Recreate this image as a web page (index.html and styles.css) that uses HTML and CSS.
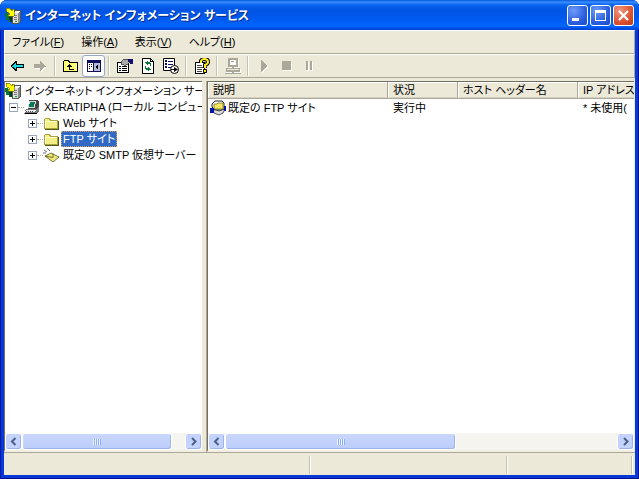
FILE: index.html
```html
<!DOCTYPE html>
<html lang="ja">
<head>
<meta charset="utf-8">
<title>インターネット インフォメーション サービス</title>
<link rel="stylesheet" href="styles.css">
</head>
<body>
<svg class="defs" aria-hidden="true">
  <symbol id="iis" viewBox="0 0 16 16">
    <path d="M7 4l3-2h6v11l-3 3H7z" fill="#555"/>
    <path d="M8 5h5v10H8z" fill="#ddd"/><path d="M13 5l2-2v10l-2 2z" fill="#888"/><path d="M8 5l2-2h5l-2 2z" fill="#f4f4f4"/>
    <path d="M9 7h3v1H9zM9 9h3v1H9zM9 11h3v1H9z" fill="#777"/><path d="M10 13h2v1h-2z" fill="#0a0"/>
    <path d="M0 5h3v3h4v6H4v-2H1V9H0z" fill="#087a35"/><path d="M4 9h3v5H5z" fill="#053a25"/>
    <path d="M1 0h3l3 3V1h2v7H3V6h2L1 3z" fill="#ff0" stroke="#5a5a00" stroke-width=".6"/>
  </symbol>
  <symbol id="folder" viewBox="0 0 16 16">
    <path d="M1.500 4.500l1-1h4l1 2h7v8h-13z" fill="#f5ee86" stroke="#a8a440"/>
    <path d="M2 6h12v1H2zM2 6h1v7H2z" fill="#ffffd5"/>
    <path d="M2 14h13V6h1v9H2z" fill="#555520"/>
  </symbol>
</svg>
<div class="window">
  <header class="titlebar">
    <svg class="icon"><use href="#iis"/></svg>
    <h1>インターネット インフォメーション サービス</h1>
    <button class="caption" aria-label="最小化"><svg viewBox="0 0 21 21"><path d="M5 13h7v3H5z" fill="#fff"/></svg></button>
    <button class="caption" aria-label="最大化"><svg viewBox="0 0 21 21"><path d="M5 5h11v11H5zM6 8v7h9V8z" fill="#fff" fill-rule="evenodd"/></svg></button>
    <button class="caption close" aria-label="閉じる"><svg class="smooth" viewBox="0 0 21 21"><path d="M6 6l9 9M15 6l-9 9" stroke="#fff" stroke-width="2.200"/></svg></button>
  </header>
  <nav class="menubar">
    <button>ファイル(<u>F</u>)</button><button>操作(<u>A</u>)</button><button>表示(<u>V</u>)</button><button>ヘルプ(<u>H</u>)</button>
  </nav>
  <div class="toolbar" role="toolbar">
    <button aria-label="戻る"><svg class="icon" viewBox="0 0 16 16"><path d="M2 7h1V6h1V5h1V4h1V3h2v3h7v4H8v3H6v-1H5v-1H4v-1H3V9H2z"/><path d="M3 8h1V7h1V6h1V5h1v2h7v2H7v2H6v-1H5V9H3z" fill="#19dce8"/></svg></button>
    <button aria-label="進む" disabled><svg class="icon" viewBox="0 0 16 16"><path d="M15 9L9 14v-3H3v-2h7z" fill="#fff"/><path d="M14 8h-1V7h-1V6h-1V5h-1V4H9V3H8v3H2v4h6v3h1v-1h1v-1h1v-1h1V9h1z" fill="#aca899"/></svg></button>
    <i class="sep"></i>
    <button aria-label="上へ"><svg class="icon" viewBox="0 0 16 16"><path d="M.5 13.500v-10l1-1h4l1 2h8v9z" fill="#ffff78" stroke="#000"/><path d="M6 6h1v1h1v1h1v1H7v2h4v1H6V9H4V8h1V7h1z"/></svg></button>
    <button class="pressed" aria-label="コンソール ツリー"><svg class="icon" viewBox="0 0 16 16"><path d="M1 2h14v12H1z" fill="#101060"/><path d="M2 5h5v8H2z" fill="#fff"/><path d="M8 5h6v8H8z" fill="#b5b9d5"/><path d="M3 6h1v1H3zM5 6h1v1H5zM3 8h1v1H3zM5 8h1v1H5zM3 10h1v1H3zM12 6v6L9 9z"/></svg></button>
    <i class="sep"></i>
    <button aria-label="プロパティ"><svg class="icon" viewBox="0 0 16 16"><path d="M.5 4.500h11v10H.5z" fill="#fff" stroke="#000"/><path d="M2 8h2v1H2zM5 8h5v1H5zM2 10h2v1H2zM5 10h5v1H5zM2 12h2v1H2zM5 12h5v1H5z"/><path d="M4 4l3-3h5v4l-3 2H7L6 6H4z" fill="#aaa" stroke="#333" stroke-width=".8"/><path d="M11 1h5v5h-3V4h-2z" fill="#101070"/></svg></button>
    <button aria-label="最新の情報に更新"><svg class="icon" viewBox="0 0 16 16"><path d="M2.500.5h8l3 3v12h-11z" fill="#fff" stroke="#000"/><path d="M10.500.5v3h3" fill="none" stroke="#000"/><path d="M7 3h1v1h2v1h1v3h-1V6H8v1H7V6H6V5H5V4h2zM5 8h1v2h2V9h1v1h1v1h1v1H9v1H8v-1H6v-1H5z" fill="#087a35"/></svg></button>
    <button aria-label="一覧のエクスポート"><svg class="icon smooth" viewBox="0 0 16 16"><path d="M.5.5h11v12H.5z" fill="#fff" stroke="#000"/><path d="M2 2h2v2H2zM2 5h2v2H2zM2 8h2v2H2zM5 3h5v1H5zM5 6h5v1H5zM5 9h3v1H5z" fill="#101060"/><circle cx="11.500" cy="11.500" r="4" fill="#fff" stroke="#000"/><path d="M8 11h3V9l4 2.500-4 2.500v-2H8z"/></svg></button>
    <i class="sep"></i>
    <button aria-label="ヘルプ"><svg class="icon" viewBox="0 0 16 16"><path d="M1.500 4.500h9v11h-9z" fill="#fff" stroke="#000"/><path d="M3 7h5v1H3zM3 9h6v1H3zM3 11h5v1H3zM3 13h5v1H3z" fill="#444"/><g class="smooth"><path d="M7 5V3q1-2 3-2 4 0 4 3 0 2-3 3v3" fill="none" stroke="#000" stroke-width="4"/><path d="M7 5V3q1-2 3-2 4 0 4 3 0 2-3 3v3" fill="none" stroke="#fff21a" stroke-width="2"/><path d="M9.500 11.500h3v3h-3z" fill="#fff21a" stroke="#000"/></g></svg></button>
    <i class="sep"></i>
    <button aria-label="接続" disabled><svg class="icon" viewBox="0 0 16 16"><path d="M4 1h10v9H4zM1 11h15v5H1z" fill="#fff"/><path d="M3 0h10v9H3zM5 2v5h6V2z" fill="#aca899" fill-rule="evenodd"/><path d="M7 9h2v1H7zM1 10h14v4H1zM0 15h16v1H0zM7 14h2v1H7zM6 3h3v1H6z" fill="#aca899"/><path d="M2 11h12v1H2z" fill="#ece9d8"/></svg></button>
    <i class="sep"></i>
    <button aria-label="開始" disabled><svg class="icon" viewBox="0 0 16 16"><path d="M6 3v12l6-6z" fill="#fff"/><path d="M5 2v12l6-6z" fill="#aca899"/></svg></button>
    <button aria-label="停止" disabled><svg class="icon" viewBox="0 0 16 16"><path d="M4 4h9v9H4z" fill="#fff"/><path d="M3 3h9v9H3z" fill="#aca899"/></svg></button>
    <button aria-label="一時停止" disabled><svg class="icon" viewBox="0 0 16 16"><path d="M5 4h2v9H5zM9 4h2v9H9z" fill="#fff"/><path d="M4 3h2v9H4zM8 3h2v9H8z" fill="#aca899"/></svg></button>
  </div>
  <main class="panes">
    <section class="pane tree-pane">
      <ul class="tree">
        <li><svg class="icon"><use href="#iis"/></svg><span>インターネット インフォメーション サービス</span></li>
        <li class="level1"><button class="toggle" aria-label="折りたたむ"><svg viewBox="0 0 9 9"><path d="M2 4h5v1H2z"/></svg></button><i class="branch"></i>
          <svg class="icon" viewBox="0 0 16 16"><path d="M5 1h8l2 1v8H4z" fill="#444"/><path d="M5 2h7l-1 7H4z" fill="#ddd"/><path d="M6 3h5l-1 5H5z" fill="#087a55"/><path d="M2 10h10l3-2v4l-2 3H0z" fill="#777"/><path d="M2 11h10l-1 2H1z" fill="#eee"/><path d="M2 12h8" stroke="#444" stroke-dasharray="1 1"/><path d="M1 14h12v1H1z"/></svg><span>XERATIPHA (ローカル コンピューター)</span></li>
        <li class="level2"><button class="toggle" aria-label="展開"><svg viewBox="0 0 9 9"><path d="M2 4h5v1H2zM4 2h1v5H4z"/></svg></button><i class="branch"></i><svg class="icon"><use href="#folder"/></svg><span>Web サイト</span></li>
        <li class="level2"><button class="toggle" aria-label="展開"><svg viewBox="0 0 9 9"><path d="M2 4h5v1H2zM4 2h1v5H4z"/></svg></button><i class="branch"></i><svg class="icon"><use href="#folder"/></svg><span class="selected">FTP サイト</span></li>
        <li class="level2"><button class="toggle" aria-label="展開"><svg viewBox="0 0 9 9"><path d="M2 4h5v1H2zM4 2h1v5H4z"/></svg></button><i class="branch"></i>
          <svg class="icon smooth" viewBox="0 0 16 16"><path d="M2 9l6-3 8 4-6 5z" fill="#f0e878" stroke="#555520" stroke-width=".8"/><path d="M2 9l8 1.500V6.500" fill="none" stroke="#555520" stroke-width=".8"/><path d="M1 3l3 2M4 1l3 3M0 6h3" stroke="#333" stroke-width=".7"/></svg><span>既定の SMTP 仮想サーバー</span></li>
      </ul>
      <div class="scrollbar">
        <button aria-label="左へ"><svg viewBox="0 0 9 9"><path d="M6.500 1L3 4.500 6.500 8"/></svg></button>
        <div class="track"><div class="thumb tree-thumb"><i class="grip"></i></div></div>
        <button aria-label="右へ"><svg viewBox="0 0 9 9"><path d="M3 1l3.500 3.500L3 8"/></svg></button>
      </div>
    </section>
    <section class="pane list-pane">
      <div class="list">
        <table>
          <colgroup><col class="c-name"><col class="c-state"><col class="c-host"><col class="c-ip"></colgroup>
          <thead><tr><th>説明</th><th>状況</th><th>ホスト ヘッダー名</th><th>IP アドレス</th></tr></thead>
          <tbody><tr><td><div class="name"><svg class="icon smooth" viewBox="0 0 16 16"><path d="M2 6V4l3-3h7l2 2v7H3z" fill="#fff" stroke="#222"/><path d="M4 6V4h3l1-1h5v6H4z" fill="#f5e85a" stroke="#77751a" stroke-width=".8"/><path d="M2 10h4l3 1 6-2-2 4-4 2-5-2z" fill="#ddd" stroke="#222" stroke-width=".8"/><path d="M0 8h4v5H0zM14 6h2v5h-2z" fill="#0014a8"/></svg><span>既定の FTP サイト</span></div></td><td>実行中</td><td></td><td>* 未使用(</td></tr></tbody>
        </table>
      </div>
      <div class="scrollbar">
        <button aria-label="左へ"><svg viewBox="0 0 9 9"><path d="M6.500 1L3 4.500 6.500 8"/></svg></button>
        <div class="track"><div class="thumb list-thumb"><i class="grip"></i></div></div>
        <button aria-label="右へ"><svg viewBox="0 0 9 9"><path d="M3 1l3.500 3.500L3 8"/></svg></button>
      </div>
    </section>
  </main>
  <footer class="status"><span></span><span></span><span></span></footer>
</div>
</body>
</html>
```

FILE: styles.css
```css
* { box-sizing: border-box; }
body {
  margin: 0;
  background: #fff;
  color: #000;
  font: 11px/16px "Liberation Sans", "Noto Sans CJK JP", sans-serif;
  font-feature-settings: "palt";
}
button {
  margin: 0;
  padding: 0;
  border: 0;
  background: none;
  color: inherit;
  font: inherit;
  font-feature-settings: inherit;
}
svg { display: block; shape-rendering: crispEdges; }
.smooth { shape-rendering: auto; }
.defs { position: absolute; width: 0; height: 0; }
.icon { flex: none; width: 16px; height: 16px; }

.window {
  display: flex;
  flex-direction: column;
  height: 100vh;
  padding: 0 4px 4px;
  overflow: hidden;
  border-radius: 7px 7px 0 0;
  background: #0839d6;
  box-shadow: inset 1px 0 #0019a8, inset -1px -1px #00138c;
}
.titlebar {
  display: flex;
  flex: none;
  align-items: center;
  gap: 2px;
  height: 30px;
  margin: 0 -4px;
  padding: 1px 5px 0;
  background: linear-gradient(#0058d8 0, #3c8cff 2px, #0864ee 5px, #0054e3 10px, #0058ee 18px, #0066ff 26px, #003dd0 30px);
}
.titlebar h1 {
  flex: 1;
  min-width: 0;
  margin: 0 0 0 2px;
  overflow: hidden;
  color: #fff;
  font-size: 12px;
  font-weight: bold;
  text-shadow: 1px 1px #0a2c8c;
  white-space: nowrap;
}
.caption {
  width: 21px;
  height: 21px;
  border: 1px solid #fff;
  border-radius: 3px;
  background: radial-gradient(circle at 30% 25%, #6f9cf8, #2a5fe0 60%, #1c48c8);
}
.caption svg { width: 21px; height: 21px; margin: -1px; }
.close { background: radial-gradient(circle at 30% 25%, #f09880, #dc5230 60%, #c03a18); }

.menubar, .toolbar {
  display: flex;
  flex: none;
  align-items: center;
  height: 24px;
  border: 1px solid;
  border-color: #fff #aca899 #aca899 #fff;
  background: #ece9d8;
}
.menubar { gap: 17px; padding-left: 7px; }
.menubar button { line-height: 20px; }
.toolbar button { display: grid; place-items: center; width: 23px; height: 22px; }
.toolbar .pressed {
  border: 1px solid #98a8c8;
  border-radius: 3px;
  background: #fff;
}
.sep {
  width: 2px;
  height: 20px;
  margin: 0 3px;
  border-left: 1px solid #c5c2b0;
  border-right: 1px solid #fff;
}

.panes {
  display: flex;
  flex: 1;
  gap: 5px;
  min-height: 0;
  padding: 3px 1px 0 0;
  background: #ece9d8;
}
.pane {
  display: flex;
  flex-direction: column;
  min-width: 0;
  border-top: 1px solid #716f64;
  border-left: 1px solid #716f64;
  border-bottom: 2px solid #f1efe2;
  background: #fff;
}
.tree-pane { flex: 0 0 198px; }
.list-pane { flex: 1; box-shadow: -1px 0 #aca899; }
.tree {
  flex: 1;
  min-height: 0;
  margin: 0;
  padding: 1px 0 0;
  overflow: hidden;
  list-style: none;
}
.tree li { display: flex; align-items: center; height: 16px; white-space: nowrap; }
.tree span { min-width: 0; margin-left: 2px; padding: 0 2px; overflow: hidden; }
.tree .level1 { padding-left: 4px; }
.tree .level2 { padding-left: 23px; }
.toggle {
  flex: none;
  width: 9px;
  height: 9px;
  border: 1px solid #98a8b8;
  background: #fff;
}
.toggle svg { width: 9px; height: 9px; margin: -1px; }
.branch { flex: none; width: 6px; border-top: 1px dotted #aca899; }
.tree .selected { outline: 1px dotted #d8a060; outline-offset: -1px; background: #316ac5; color: #fff; }

.list { flex: 1; min-height: 0; overflow: hidden; }
table { width: 600px; border-collapse: separate; border-spacing: 0; table-layout: fixed; }
.c-name { width: 180px; }
.c-state { width: 70px; }
.c-host { width: 120px; }
th {
  height: 17px;
  padding: 1px 5px 0;
  border-right: 1px solid #aca899;
  border-bottom: 1px solid #aca899;
  background: #ece9d8;
  box-shadow: inset 1px 1px #fff, inset 0 -1px #d6d2c2;
  font-weight: normal;
  line-height: 15px;
  text-align: left;
}
td { padding: 1px 5px 0; white-space: nowrap; }
.name { display: flex; gap: 2px; margin-left: -3px; }

.scrollbar { display: flex; flex: none; height: 17px; background: #f5f4ee; }
.scrollbar button {
  display: grid;
  flex: none;
  place-items: center;
  width: 17px;
  border: 1px solid #fff;
  border-radius: 3px;
  background: #c3d3fd;
  box-shadow: inset -1px -1px #9db4e8;
}
.scrollbar svg { width: 9px; height: 9px; fill: none; stroke: #4d6185; stroke-width: 2; shape-rendering: auto; }
.track { flex: 1; min-width: 0; }
.thumb {
  display: grid;
  place-items: center;
  height: 17px;
  border: 1px solid #fff;
  border-radius: 3px;
  background: linear-gradient(#c9d7fd, #bccdfa);
  box-shadow: inset -1px -1px #9db4e8;
}
.tree-thumb { width: 92%; }
.list-thumb { width: 59%; }
.grip { width: 8px; height: 6px; background: repeating-linear-gradient(90deg, #eef4fe 0 1px, #8cb0f8 1px 2px); }

.status {
  display: grid;
  flex: none;
  grid-template-columns: 306fr 197fr 125fr;
  height: 23px;
  padding: 3px 3px 1px 0;
  border-top: 1px solid #aca899;
  background: #ece9d8;
}
.status span { border-right: 1px solid #c5c2b0; box-shadow: 1px 0 #fff; }
```
